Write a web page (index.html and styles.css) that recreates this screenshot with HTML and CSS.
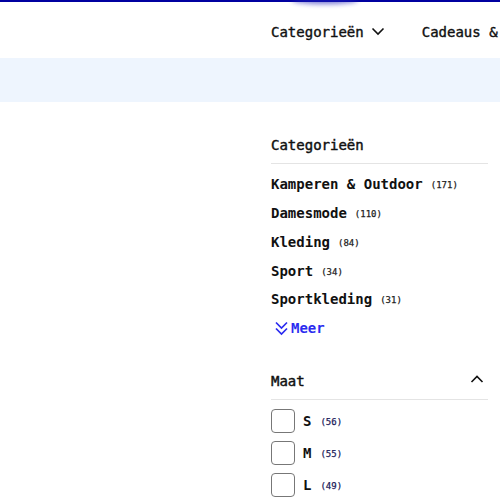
FILE: index.html
```html
<!DOCTYPE html>
<html lang="nl">
<head>
<meta charset="utf-8">
<link rel="stylesheet" href="styles.css">
</head>
<body>
<div class="topbar"><span class="blob"></span></div>
<header class="header">
  <nav class="nav">
    <a class="nav-item">Categorieën
      <svg class="chev" width="14" height="14" viewBox="0 0 14 14"><path d="M1.5 4.5 L7 10 L12.5 4.5" fill="none" stroke="#111" stroke-width="1.6"/></svg>
    </a>
    <a class="nav-item">Cadeaus &amp;</a>
  </nav>
</header>
<div class="band"></div>
<main class="main">
  <aside class="sidebar">
    <section class="filter">
      <h3 class="filter-title">Categorieën</h3>
      <ul class="cat-list">
        <li class="cat">Kamperen &amp; Outdoor <span class="count">(171)</span></li>
        <li class="cat">Damesmode <span class="count">(110)</span></li>
        <li class="cat">Kleding <span class="count">(84)</span></li>
        <li class="cat">Sport <span class="count">(34)</span></li>
        <li class="cat">Sportkleding <span class="count">(31)</span></li>
        <li class="cat more">
          <svg class="dbl" width="15" height="15" viewBox="0 0 15 15"><path d="M2 1.5 L7.5 7 L13 1.5 M2 7.5 L7.5 13 L13 7.5" fill="none" stroke="#2b2bf0" stroke-width="1.7"/></svg>Meer
        </li>
      </ul>
    </section>
    <section class="filter maat">
      <h3 class="filter-title row">Maat
        <svg class="up" width="14" height="14" viewBox="0 0 14 14"><path d="M1.5 10 L7 4.5 L12.5 10" fill="none" stroke="#111" stroke-width="1.6"/></svg>
      </h3>
      <ul class="size-list">
        <li class="size"><span class="box"></span><span class="size-label">S</span><span class="count">(56)</span></li>
        <li class="size"><span class="box"></span><span class="size-label">M</span><span class="count">(55)</span></li>
        <li class="size"><span class="box"></span><span class="size-label">L</span><span class="count">(49)</span></li>
      </ul>
    </section>
  </aside>
</main>
</body>
</html>
```
FILE: styles.css
```css
* { box-sizing: border-box; }
html, body { margin: 0; padding: 0; background: #fff; overflow: hidden; }
body {
  font-family: "DejaVu Sans Mono", "Liberation Mono", monospace;
  color: #111;
  width: 500px;
  height: 500px;
}
.topbar {
  position: relative;
  height: 2px;
  background: #0000a0;
}
.blob {
  position: absolute;
  left: 292px;
  top: -4px;
  width: 66px;
  height: 8px;
  border-radius: 50%;
  background: #2020b8;
  filter: blur(2.5px);
  opacity: 0.6;
}
.header {
  height: 56px;
  display: flex;
  align-items: center;
  padding-left: 271px;
  white-space: nowrap;
}
.nav { display: flex; gap: 37px; }
.nav-item {
  display: flex;
  align-items: center;
  gap: 7px;
  font-size: 14px;
  font-weight: normal;
  -webkit-text-stroke: 0.4px #111;
  line-height: 20px;
  margin-top: 3px;
}
.chev { margin-top: -1px; }
.band {
  height: 44px;
  background: #eef5fe;
}
.main { padding-left: 271px; }
.sidebar { width: 217px; }
.filter-title {
  margin: 33px 0 0;
  font-size: 14px;
  font-weight: normal;
  -webkit-text-stroke: 0.45px #111;
  line-height: 20px;
  padding-bottom: 8px;
  border-bottom: 1px solid #e4e4e4;
}
.row { display: flex; justify-content: space-between; align-items: center; }
.up { margin-right: 4px; margin-top: -4px; }
.cat-list, .size-list { list-style: none; margin: 0; padding: 0; }
.cat-list { padding-top: 6px; }
.cat {
  display: flex;
  align-items: center;
  gap: 8px;
  height: 28.75px;
  font-size: 14px;
  font-weight: bold;
  line-height: 20px;
  white-space: nowrap;
}
.count {
  font-size: 9px;
  font-weight: normal;
  -webkit-text-stroke: 0.25px #222;
  line-height: 12px;
  color: #222;
  margin-top: 2px;
}
.more {
  color: #2b2bf0;
  gap: 2px;
  padding-left: 3px;
}
.maat .filter-title { margin-top: 28px; }
.size-list { padding-top: 9px; }
.size {
  display: flex;
  align-items: center;
  height: 32px;
  padding-bottom: 8px;
}
.box {
  width: 24px;
  height: 24px;
  border: 1.5px solid #777;
  border-radius: 4px;
  margin-right: 8px;
}
.size-label {
  font-size: 14px;
  font-weight: bold;
  margin-right: 9px;
}
.size .count { color: #1b1b5a; -webkit-text-stroke: 0.25px #1b1b5a; }
```
